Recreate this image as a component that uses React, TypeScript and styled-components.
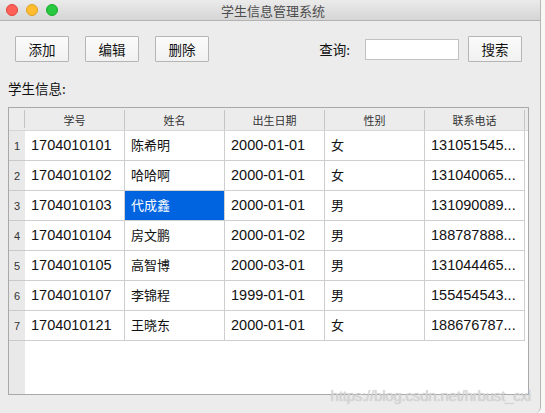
import React from "react";
import styled, { createGlobalStyle } from "styled-components";

const GlobalStyle = createGlobalStyle`
  html, body {
    margin: 0;
    padding: 0;
    background: #f7f7f5;
  }
  body {
    font-family: "Liberation Sans", "Noto Sans CJK SC", sans-serif;
  }
`;

type Student = {
  id: string;
  name: string;
  birth: string;
  sex: string;
  phone: string;
};

const students: Student[] = [
  { id: "1704010101", name: "陈希明", birth: "2000-01-01", sex: "女", phone: "13105154567" },
  { id: "1704010102", name: "哈哈啊", birth: "2000-01-01", sex: "女", phone: "13104006578" },
  { id: "1704010103", name: "代成鑫", birth: "2000-01-01", sex: "男", phone: "13109008912" },
  { id: "1704010104", name: "房文鹏", birth: "2000-01-02", sex: "男", phone: "18878788812" },
  { id: "1704010105", name: "高智博", birth: "2000-03-01", sex: "男", phone: "13104446512" },
  { id: "1704010107", name: "李锦程", birth: "1999-01-01", sex: "男", phone: "15545454321" },
  { id: "1704010121", name: "王晓东", birth: "2000-01-01", sex: "女", phone: "18867678712" },
];

const columns = ["学号", "姓名", "出生日期", "性别", "联系电话"];

const clip = (text: string, max: number) =>
  text.length > max ? text.slice(0, max) + "..." : text;

export default function App() {
  return (
    <>
      <GlobalStyle />
      <Window>
        <TitleBar>
          <Lights>
            <Light color="#fe5f57" border="#e0443e" />
            <Light color="#febc2e" border="#dea123" />
            <Light color="#28c840" border="#1aab29" />
          </Lights>
          <Title>学生信息管理系统</Title>
        </TitleBar>
        <Content>
          <Toolbar>
            <ButtonGroup>
              <Button>添加</Button>
              <Button>编辑</Button>
              <Button>删除</Button>
            </ButtonGroup>
            <SearchGroup>
              <Label>查询:</Label>
              <SearchInput />
              <Button>搜索</Button>
            </SearchGroup>
          </Toolbar>
          <SectionLabel>学生信息:</SectionLabel>
          <TableBox>
            <HeaderRow>
              <CornerCell />
              {columns.map((c) => (
                <HeaderCell key={c}>{c}</HeaderCell>
              ))}
            </HeaderRow>
            {students.map((s, i) => (
              <Row key={s.id}>
                <RowNum>{i + 1}</RowNum>
                <Cell>{s.id}</Cell>
                <Cell cjk selected={i === 2}>{s.name}</Cell>
                <Cell>{s.birth}</Cell>
                <Cell cjk>{s.sex}</Cell>
                <Cell>{clip(s.phone, 9)}</Cell>
              </Row>
            ))}
            <Filler>
              <FillerSide />
            </Filler>
          </TableBox>
        </Content>
        <Watermark>https://blog.csdn.net/hrbust_cxl</Watermark>
      </Window>
    </>
  );
}

const Window = styled.div`
  position: relative;
  width: 541px;
  height: 413px;
  background: #ececec;
  border-right: 1px solid #b8b8b8;
  border-bottom-right-radius: 6px;
  box-sizing: border-box;
  overflow: hidden;
`;

const TitleBar = styled.div`
  height: 21px;
  box-sizing: border-box;
  display: flex;
  align-items: center;
  justify-content: center;
  position: relative;
  background: linear-gradient(#ebebeb, #d5d5d5);
  border-bottom: 1px solid #b3b3b3;
`;

const Lights = styled.div`
  position: absolute;
  left: 6px;
  top: 4px;
  display: flex;
  gap: 8px;
`;

const Light = styled.span<{ color: string; border: string }>`
  width: 12px;
  height: 12px;
  border-radius: 50%;
  box-sizing: border-box;
  background: ${(p) => p.color};
  border: 0.5px solid ${(p) => p.border};
`;

const Title = styled.div`
  font-family: "Noto Sans CJK SC", sans-serif;
  font-size: 13px;
  color: #4c4c4c;
  margin-left: 6px;
`;

const Content = styled.div`
  padding: 15px 0 0 8px;
`;

const Toolbar = styled.div`
  display: flex;
  align-items: center;
  justify-content: space-between;
  padding: 0 18px 0 7px;
`;

const ButtonGroup = styled.div`
  display: flex;
  gap: 16px;
`;

const SearchGroup = styled.div`
  display: flex;
  align-items: center;
`;

const Button = styled.button`
  width: 54px;
  height: 26px;
  padding: 0;
  background: linear-gradient(#fbfbfb, #f1f1f1);
  border: 1px solid #b5b5b5;
  border-radius: 1px;
  font-family: "Noto Sans CJK SC", sans-serif;
  font-size: 13.5px;
  color: #111;
`;

const Label = styled.span`
  font-family: "Noto Sans CJK SC", sans-serif;
  font-size: 13.5px;
  color: #111;
  margin-right: 15px;
`;

const SearchInput = styled.input`
  width: 94px;
  height: 21px;
  box-sizing: border-box;
  border: 1px solid #c2c2c2;
  background: #fff;
  margin-right: 9px;
  outline: none;
`;

const SectionLabel = styled.div`
  font-family: "Noto Sans CJK SC", sans-serif;
  font-size: 13.5px;
  color: #111;
  margin-top: 16px;
  height: 20px;
  line-height: 20px;
`;

const TableBox = styled.div`
  margin-top: 9px;
  width: 521px;
  height: 288px;
  box-sizing: border-box;
  border: 1px solid #a9a9a9;
  background: #fff;
  display: flex;
  flex-direction: column;
`;

const gridCols = "16px repeat(5, 100px) 1fr";

const HeaderRow = styled.div`
  display: grid;
  grid-template-columns: ${gridCols};
  height: 22px;
  background: #ececec;
  border-bottom: 1px solid #d6d6d6;
`;

const CornerCell = styled.div`
  border-right: 1px solid #c4c4c4;
  margin: 2px 0;
`;

const HeaderCell = styled.div`
  font-family: "Noto Sans CJK SC", sans-serif;
  font-size: 11px;
  color: #333;
  display: flex;
  align-items: center;
  justify-content: center;
  border-right: 1px solid #c4c4c4;
  margin: 2px 0 0;
`;

const Row = styled.div`
  display: grid;
  grid-template-columns: ${gridCols};
  height: 30px;
`;

const RowNum = styled.div`
  background: #e9e9e9;
  border-bottom: 1px solid #c9c9c9;
  font-size: 11px;
  color: #333;
  display: flex;
  align-items: center;
  justify-content: center;
`;

const Cell = styled.div<{ selected?: boolean; cjk?: boolean }>`
  font-family: ${(p) =>
    p.cjk
      ? `"Noto Sans CJK SC", sans-serif`
      : `"Liberation Sans", "Noto Sans CJK SC", sans-serif`};
  font-size: ${(p) => (p.cjk ? "13px" : "14.5px")};
  color: ${(p) => (p.selected ? "#fff" : "#111")};
  background: ${(p) => (p.selected ? "#0064e1" : "#fff")};
  border-right: 1px solid #cfcfcf;
  border-bottom: 1px solid #cfcfcf;
  padding: 0 2px ${(p) => (p.cjk ? "2px" : "0")} 6px;
  line-height: ${(p) => (p.cjk ? "27px" : "29px")};
  overflow: hidden;
  white-space: nowrap;
  text-overflow: ellipsis;
  min-width: 0;
`;

const Filler = styled.div`
  flex: 1;
  display: flex;
`;

const FillerSide = styled.div`
  width: 16px;
  background: #e9e9e9;
`;

const Watermark = styled.div`
  position: absolute;
  right: 9px;
  bottom: 9px;
  font-family: "Liberation Sans", sans-serif;
  font-size: 15px;
  color: rgba(215, 215, 215, 0.9);
  text-shadow: 0 0 1px rgba(150, 150, 150, 0.5);
  letter-spacing: -0.2px;
`;
